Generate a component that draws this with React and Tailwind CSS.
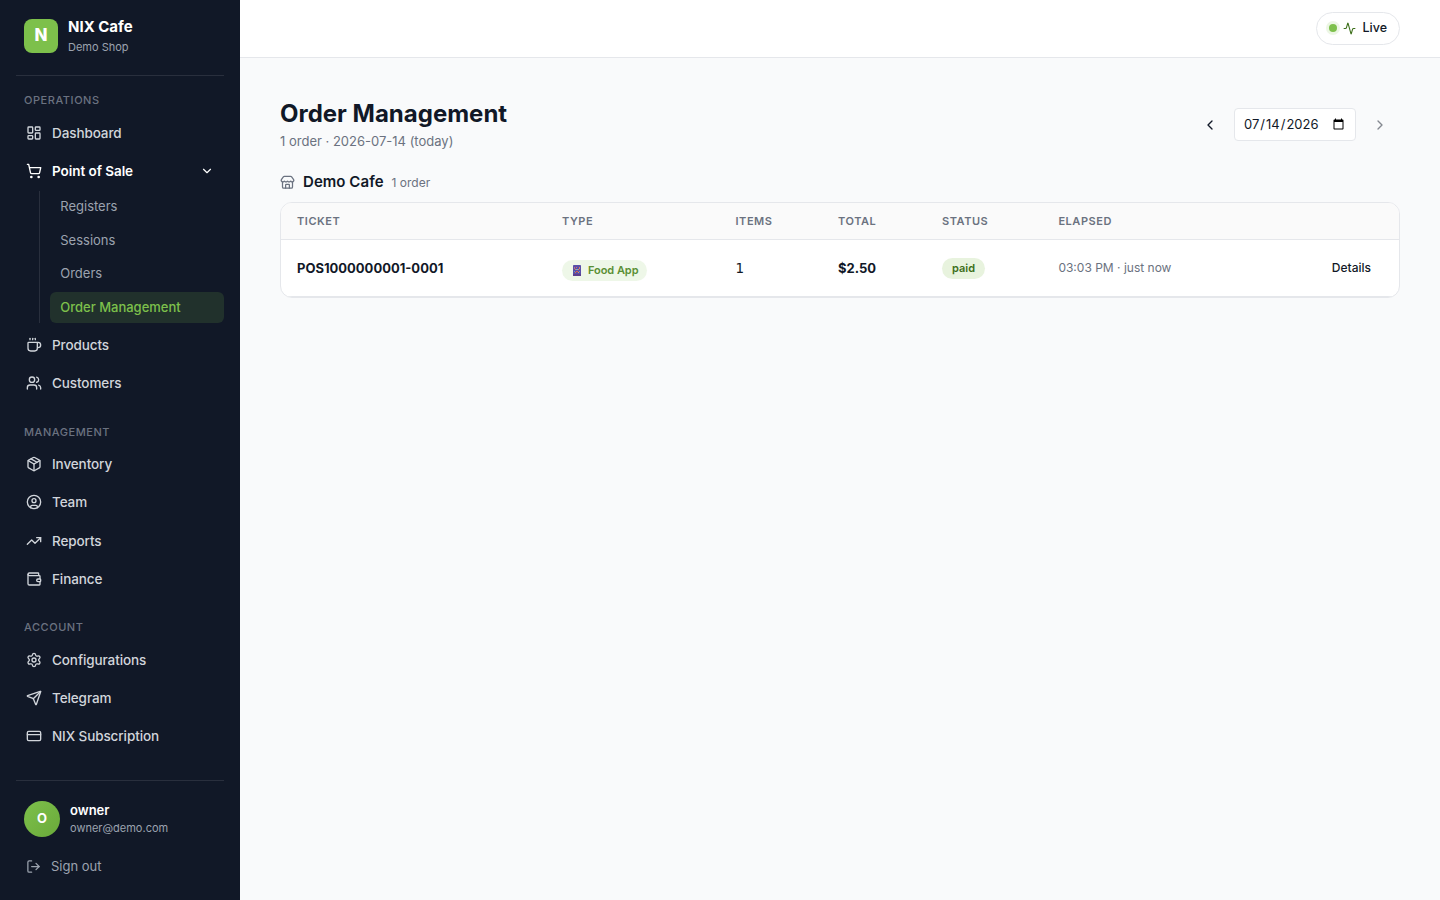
import {
  LayoutDashboard, ShoppingCart, ChevronDown, ChevronLeft, ChevronRight, Coffee, Users,
  Package, CircleUser, TrendingUp, Wallet, Settings, Send, CreditCard, LogOut, Activity, Store,
} from 'lucide-react';

function NavItem({ icon: Icon, label, open }) {
  return (
    <a
      className={
        'mb-[2px] flex items-center gap-[10px] rounded-lg px-[10px] py-2 text-[13.5px] leading-[20.25px] ' +
        (open ? 'font-semibold tracking-[-0.05px] text-white' : 'font-medium tracking-[-0.1px] text-[#d1d5db]')
      }
    >
      <Icon size={16} strokeWidth={2} className="shrink-0" />
      <span className="flex-1">{label}</span>
      {open && <ChevronDown size={14} className="shrink-0" />}
    </a>
  );
}

function SubItem({ label, active }) {
  return (
    <a
      className={
        'mb-[2px] block rounded-md py-[6px] pr-[10px] pl-[10.25px] text-[13px] leading-[19.5px] last:mb-0 ' +
        (active ? 'bg-[#7dc04b]/15 font-medium text-[#7dc04b]' : 'text-[#9ca3af]')
      }
    >
      {label}
    </a>
  );
}

function SectionLabel({ children }) {
  return (
    <div className="px-2 pb-[6px] text-[11px] leading-[16.5px] font-medium tracking-[0.55px] text-[#6b7280] uppercase">
      {children}
    </div>
  );
}

function Sidebar() {
  return (
    <aside className="flex w-60 shrink-0 flex-col bg-[#111827] px-4">
      <div className="flex h-[76px] items-start gap-[10px] border-b border-white/10 px-2 pt-[19px]">
        <div className="flex size-[34px] items-center justify-center rounded-lg bg-[#7dc04b] pb-[1px] text-[17px] font-extrabold text-white">
          N
        </div>
        <div className="-mt-[3px]">
          <div className="text-[15px] leading-[22px] font-bold text-white">NIX Cafe</div>
          <div className="text-[11px] leading-[18px] text-[#9ca3af]">Demo Shop</div>
        </div>
      </div>
      <nav className="flex-1 pt-4">
        <section className="mb-[22px]">
          <SectionLabel>Operations</SectionLabel>
          <NavItem icon={LayoutDashboard} label="Dashboard" />
          <NavItem icon={ShoppingCart} label="Point of Sale" open />
          <div className="mb-1 ml-[23px] border-l border-white/10 pl-[10px]">
            <SubItem label="Registers" />
            <SubItem label="Sessions" />
            <SubItem label="Orders" />
            <SubItem label="Order Management" active />
          </div>
          <NavItem icon={Coffee} label="Products" />
          <NavItem icon={Users} label="Customers" />
        </section>
        <section className="mb-[22px]">
          <SectionLabel>Management</SectionLabel>
          <NavItem icon={Package} label="Inventory" />
          <NavItem icon={CircleUser} label="Team" />
          <NavItem icon={TrendingUp} label="Reports" />
          <NavItem icon={Wallet} label="Finance" />
        </section>
        <section>
          <SectionLabel>Account</SectionLabel>
          <NavItem icon={Settings} label="Configurations" />
          <NavItem icon={Send} label="Telegram" />
          <NavItem icon={CreditCard} label="NIX Subscription" />
        </section>
      </nav>
      <div className="h-[120px] border-t border-white/10 pt-5">
        <div className="flex h-9 items-center gap-[10px] px-2">
          <div className="flex size-9 items-center justify-center rounded-full bg-linear-135 from-[#7dc04b] to-[#6aaa3a] text-[13px] font-bold text-white">
            O
          </div>
          <div>
            <div className="text-[13px] leading-[18px] font-semibold text-white">owner</div>
            <div className="text-[11px] leading-[18px] text-[#9ca3af]">owner@demo.com</div>
          </div>
        </div>
        <a className="mt-[19px] flex items-center gap-[10px] px-[10px] text-[13px] leading-[20px] text-[#9ca3af]">
          <LogOut size={15} />
          Sign out
        </a>
      </div>
    </aside>
  );
}

function DatePicker() {
  return (
    <div className="mt-[10px] mr-1 flex items-center gap-2">
      <button className="flex h-8 w-8 items-center justify-center text-[#111827]">
        <ChevronLeft size={16} />
      </button>
      <input
        type="date"
        defaultValue="2026-07-14"
        className="h-[33px] w-[122px] rounded border border-[#e5e7eb] bg-white pr-2 pl-2 text-[13px] text-[#111827]"
      />
      <button className="flex h-8 w-8 items-center justify-center text-[#111827] opacity-50">
        <ChevronRight size={16} />
      </button>
    </div>
  );
}

function PhoneIcon() {
  return (
    <svg width="8" height="11" viewBox="0 0 8 11" className="mr-[7px] shrink-0">
      <rect width="8" height="11" rx="0.4" fill="#5a4fa8" />
      <rect y="9" width="8" height="2" rx="0.4" fill="#5d3f8c" />
      <rect x="1" y="2" width="1" height="2" fill="#b3708c" />
      <rect x="3" y="2" width="1" height="1" fill="#d8685f" />
      <rect x="6" y="2" width="1" height="2" fill="#d08070" />
      <rect x="2" y="4" width="1" height="1" fill="#e08a4a" />
      <rect x="3" y="4" width="2" height="1" fill="#6fa8dc" />
      <rect x="5" y="4" width="1" height="1" fill="#e08a4a" />
      <rect x="1" y="6" width="1" height="1" fill="#5f9bd1" />
      <rect x="3" y="6" width="2" height="1" fill="#d6604d" />
      <rect x="6" y="6" width="1" height="1" fill="#5f9bd1" />
      <rect x="2" y="7" width="1" height="1" fill="#d6704d" />
      <rect x="5" y="7" width="1" height="1" fill="#e3a04f" />
    </svg>
  );
}

function OrdersTable() {
  const th = 'px-4 text-left text-[11px] font-semibold tracking-[0.55px] text-[#6b7280] uppercase';
  return (
    <div className="overflow-hidden rounded-xl border border-[#e5e7eb] bg-white">
      <table className="w-full table-fixed border-separate border-spacing-0">
        <colgroup>
          <col className="w-[265px]" />
          <col className="w-[173.5px]" />
          <col className="w-[102.5px]" />
          <col className="w-[104px]" />
          <col className="w-[116.4px]" />
          <col className="w-[220px]" />
          <col />
        </colgroup>
        <thead>
          <tr className="h-[37px] bg-[#fafafa] *:border-b *:border-[#e5e7eb]">
            <th className={th}>Ticket</th>
            <th className={th}>Type</th>
            <th className={th}>Items</th>
            <th className={th}>Total</th>
            <th className={th}>Status</th>
            <th className={th}>Elapsed</th>
            <th />
          </tr>
        </thead>
        <tbody>
          <tr className="h-[57px] text-[13px] text-[#111827] *:border-b *:border-[#e5e7eb] *:px-4">
            <td className="pt-[2px] font-bold">POS1000000001-0001</td>
            <td className="pt-1">
              <span className="inline-flex h-[21px] w-[85px] items-center rounded-full bg-[#7dc04b]/13 pl-[11px] align-middle text-[11px] font-semibold tracking-[-0.05px] text-[#5a8f35]">
                <PhoneIcon />
                <span className="whitespace-nowrap">Food App</span>
              </span>
            </td>
            <td className="font-['DejaVu_Sans',sans-serif] text-[13.5px]">1</td>
            <td className="pt-[2px] font-bold">$2.50</td>
            <td>
              <span className="inline-flex h-[21px] items-center rounded-full bg-[#e8f3de] px-[10px] align-middle text-[11px] font-semibold text-[#3d6f1a]">
                paid
              </span>
            </td>
            <td className="text-xs text-[#6b7280]">03:03 PM · just now</td>
            <td className="text-right text-xs font-medium">
              <span className="mr-3">Details</span>
            </td>
          </tr>
        </tbody>
      </table>
    </div>
  );
}

export default function App() {
  return (
    <div className="flex h-screen overflow-hidden bg-[#f9fafb] font-['Inter',sans-serif] text-[#111827]">
      <Sidebar />
      <div className="flex min-w-0 flex-1 flex-col">
        <header className="flex h-[58px] shrink-0 items-start justify-end border-b border-[#e5e7eb] bg-white px-10 pt-3">
          <div className="flex h-[33px] w-[84px] items-center rounded-full border border-[#e5e7eb] pb-[1px] pl-3 text-[12.5px] font-medium">
            <span className="size-2 rounded-full bg-[#7dc04b] ring-3 ring-[#7dc04b]/15" />
            <Activity size={13} className="ml-[6px] text-[#3d6f1a]" />
            <span className="ml-[6.5px]">Live</span>
          </div>
        </header>
        <main className="flex-1 px-10 pt-10">
          <div className="flex items-start justify-between">
            <div>
              <h1 className="text-[24px] leading-8 font-bold">Order Management</h1>
              <p className="mt-[1px] mb-[1px] text-[13px] leading-5 text-[#6b7280]">1 order · 2026-07-14 (today)</p>
            </div>
            <DatePicker />
          </div>
          <div className="mt-[18px] mb-[9px] flex items-center gap-2">
            <Store size={15} className="mt-[2px] text-[#6b7280]" />
            <h2 className="text-[15px] leading-[23px] font-semibold tracking-[0.05px]">Demo Cafe</h2>
            <span className="pt-[2px] text-xs text-[#6b7280]">1 order</span>
          </div>
          <OrdersTable />
        </main>
      </div>
    </div>
  );
}
